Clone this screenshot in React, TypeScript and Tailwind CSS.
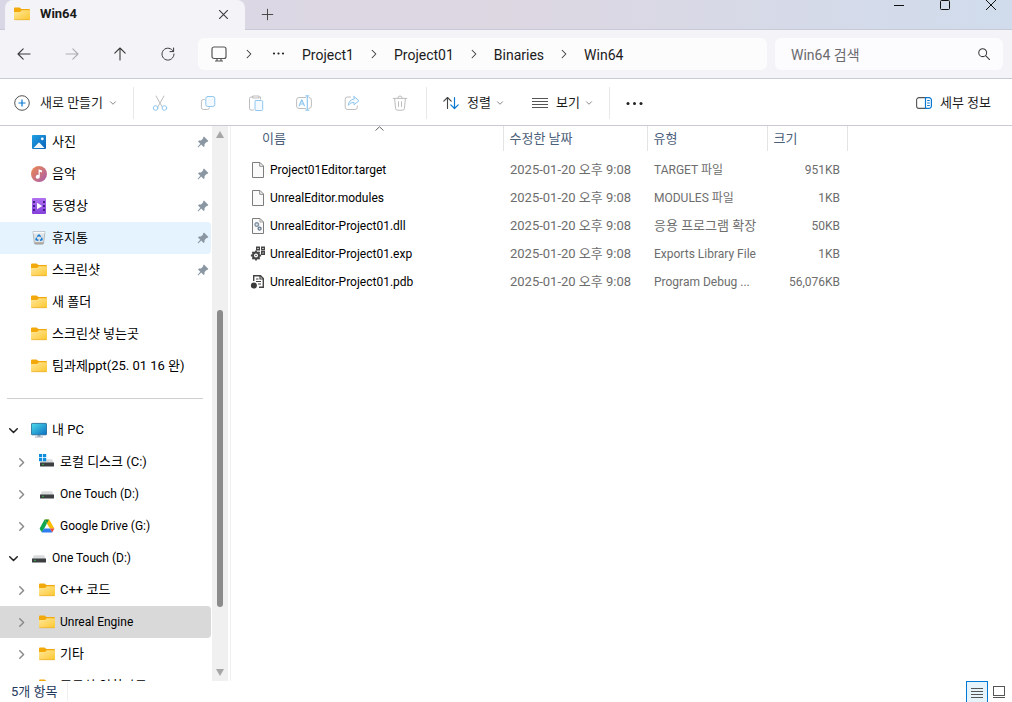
import React from "react";

type SvgProps = { className?: string };

const Folder = () => (
  <svg width="16" height="16" viewBox="0 0 16 16" className="shrink-0">
    <defs>
      <linearGradient id="fold" x1="0" y1="0" x2="1" y2="1">
        <stop offset="0" stopColor="#ffe79b" />
        <stop offset="1" stopColor="#fdc72f" />
      </linearGradient>
    </defs>
    <path d="M0 2.6Q0 1.5 1 1.5H5.6L7.4 3H15Q16 3 16 4V8H0Z" fill="#f2a90c" />
    <path d="M0 6H6L8 4.3H16V13.2Q16 14 15.2 14H.8Q0 14 0 13.2Z" fill="url(#fold)" />
    <path d="M.3 13.7H15.7" stroke="#e9a825" strokeWidth=".6" />
  </svg>
);

const Photos = () => (
  <svg width="16" height="16" viewBox="0 0 16 16" className="shrink-0">
    <defs>
      <linearGradient id="pho" x1="0" y1="0" x2="1" y2="1">
        <stop offset="0" stopColor="#20a0e4" />
        <stop offset="1" stopColor="#0a62b8" />
      </linearGradient>
    </defs>
    <rect x="1" y="1" width="14" height="14" rx="1" fill="url(#pho)" />
    <path d="M2.5 14 7.3 8.9Q8 8.2 8.7 8.9L13.5 14Z" fill="#f4faff" />
    <circle cx="11.3" cy="4.8" r="1.4" fill="#fff" />
  </svg>
);

const Music = () => (
  <svg width="16" height="16" viewBox="0 0 16 16" className="shrink-0">
    <defs>
      <linearGradient id="mus" x1="0" y1="0" x2="1" y2="1">
        <stop offset="0" stopColor="#ee8a4e" />
        <stop offset="1" stopColor="#a85cae" />
      </linearGradient>
    </defs>
    <circle cx="8" cy="8" r="8" fill="url(#mus)" />
    <path d="M7.6 3.2 11 4.4V6.6L8.8 5.8V10.8A2 2 0 1 1 7.6 9Z" fill="#fff" />
  </svg>
);

const Video = () => (
  <svg width="16" height="16" viewBox="0 0 16 16" className="shrink-0">
    <defs>
      <linearGradient id="vid" x1="0" y1="0" x2="0" y2="1">
        <stop offset="0" stopColor="#b070f0" />
        <stop offset="1" stopColor="#8440dc" />
      </linearGradient>
    </defs>
    <rect x="1" y="0" width="14" height="16" rx="1" fill="url(#vid)" />
    <path d="M2 3h2v2H2zM2 7h2v2H2zM2 11h2v2H2zM12 3h2v2h-2zM12 7h2v2h-2zM12 11h2v2h-2z" fill="#43208a" />
    <path d="M6 4.8 11.2 8 6 11.2Z" fill="#fff" />
  </svg>
);

const Recycle = () => (
  <svg width="16" height="16" viewBox="0 0 16 16" className="shrink-0">
    <path d="M2 1.5H14L12.6 13.2Q12.5 14.3 11.4 14.3H4.6Q3.5 14.3 3.4 13.2Z" fill="#dfe3e7" stroke="#9ea5ab" strokeWidth=".7" />
    <path d="M2.2 1.8H13.8L13.6 3.5H2.4Z" fill="#f7f8f9" />
    <path d="M3.4 12.3H12.6L12.3 14H3.7Z" fill="#aaa69e" />
    <path d="M6.3 6.7 8 4.9 9.7 6.7M10.6 7.6 11 9.8 8.9 10.3M7.4 10.3 5.1 9.8 5.5 7.6" fill="none" stroke="#1378cf" strokeWidth="1.4" />
  </svg>
);

const Monitor = () => (
  <svg width="16" height="16" viewBox="0 0 16 16" className="shrink-0">
    <defs>
      <linearGradient id="mon" x1="0" y1="0" x2="1" y2="1">
        <stop offset="0" stopColor="#4bdcea" />
        <stop offset="1" stopColor="#0b6fc2" />
      </linearGradient>
    </defs>
    <path d="M6.5 13H9.5V14.5H12V15.5H4V14.5H6.5Z" fill="#a4b0ba" />
    <rect x=".4" y="1.4" width="15.2" height="11.4" rx=".8" fill="url(#mon)" stroke="#17608f" strokeWidth=".8" />
  </svg>
);

const Drive = () => (
  <svg width="16" height="16" viewBox="0 0 16 16" className="shrink-0">
    <path d="M3 5.3H13L15 9H1Z" fill="#d9dbdd" />
    <rect x="1" y="8.4" width="14" height="4" rx=".5" fill="#3c3f42" />
    <rect x="3.4" y="9.8" width="1.2" height="1.2" fill="#31d843" />
  </svg>
);

const SystemDrive = () => (
  <svg width="16" height="16" viewBox="0 0 16 16" className="shrink-0">
    <path d="M6 5.3H13L15 9H1V8Z" fill="#d9dbdd" />
    <rect x="1" y="8.4" width="14" height="4" rx=".5" fill="#3c3f42" />
    <rect x="3.4" y="9.8" width="1.2" height="1.2" fill="#31d843" />
    <path d="M0 0H3.2V3.2H0ZM4 0H7.2V3.2H4ZM0 4H3.2V7.2H0ZM4 4H7.2V7.2H4Z" fill="#0f8ddf" />
  </svg>
);

const GoogleDrive = () => (
  <svg width="16" height="16" viewBox="0 0 16 16" className="shrink-0">
    <path d="M5.6 1.5 7.9 5.4 3.3 13.9 2.2 13.6.6 10.6Z" fill="#0fa750" />
    <path d="M10.2 1.5 15.4 10.5H10.9L7.9 5.4 5.6 1.5Z" fill="#fbbc04" />
    <path d="M5.6 1.5H10L7.9 5.4Z" fill="#12964a" />
    <path d="M5.2 10.5H10.9L13.4 14.2 12.9 14.4H3.1L2.6 14.2Z" fill="#2f7df0" />
    <path d="M10.9 10.5H15.4L13.7 13.6 13.2 14.2Z" fill="#ea4335" />
  </svg>
);

const Pin = () => (
  <svg width="12" height="12" viewBox="0 0 12 12" className="shrink-0">
    <path d="M7 .6 11.4 5 10.2 6.1 9.5 5.9 7.6 8 7.5 10.2 6.6 10.9 4.2 8.6 1.2 11.4.6 10.8 3.3 7.7 1 5.4 1.8 4.5 4 4.4 6.1 2.4 5.9 1.7Z" fill="#8a97a2" />
  </svg>
);

const BlankFile = () => (
  <svg width="16" height="18" viewBox="0 0 16 18" className="shrink-0">
    <path d="M2.5 1.5H10L13.5 5V16.5H2.5Z" fill="#fafafa" stroke="#7c7c7c" />
    <path d="M9.7 1.7V5.3H13.3" fill="none" stroke="#8c8c8c" />
  </svg>
);

const DllFile = () => (
  <svg width="16" height="18" viewBox="0 0 16 18" className="shrink-0">
    <path d="M2.5 1.5H10L13.5 5V16.5H2.5Z" fill="#fafafa" stroke="#7c7c7c" />
    <path d="M10 1.7V5H13.3" fill="none" stroke="#a0a0a0" />
    <circle cx="6.8" cy="7.6" r="1.8" fill="#dce6ee" stroke="#8795a3" strokeWidth="1.4" />
    <circle cx="9.6" cy="11.6" r="1.5" fill="#dce6ee" stroke="#66788a" strokeWidth="1.3" />
  </svg>
);

const ExpFile = () => (
  <svg width="16" height="18" viewBox="0 0 16 18" className="shrink-0">
    <circle cx="6" cy="10.5" r="3" fill="none" stroke="#444" strokeWidth="2" />
    <path d="M6 5.4V7M6 14V15.6M.9 10.5H2.5M9.5 10.5H11.1M2.4 6.9 3.5 8M8.5 13 9.6 14.1M9.6 6.9 8.5 8M3.5 13 2.4 14.1" stroke="#444" strokeWidth="1.8" />
    <circle cx="6" cy="10.5" r=".8" fill="#444" />
    <path d="M6.7 2.2H9.3V4.8H6.7ZM11.7 2.2H14.3V4.8H11.7ZM11.7 6.7H14.3V9.3H11.7Z" fill="#fff" stroke="#444" strokeWidth="1.4" />
  </svg>
);

const PdbFile = () => (
  <svg width="16" height="18" viewBox="0 0 16 18" className="shrink-0">
    <path d="M3.7 8V2.7H10.5L13.3 5.5V14.3H9" fill="#fff" stroke="#444" strokeWidth="1.4" />
    <path d="M10 2.5V6H13.4M6 6H8.5M6 8.5H11M8 11H11" fill="none" stroke="#444" strokeWidth="1.2" />
    <circle cx="3.9" cy="12.5" r="3" fill="#3c3c3c" />
  </svg>
);

const Stroke = ({ d, size = 16, color = "#3a3a3a", width = 1.1, className = "" }: { d: string; size?: number; color?: string; width?: number } & SvgProps) => (
  <svg width={size} height={size} viewBox="0 0 16 16" fill="none" stroke={color} strokeWidth={width} strokeLinecap="round" strokeLinejoin="round" className={"shrink-0 " + className}>
    <path d={d} />
  </svg>
);

const Caret = () => <Stroke d="M3 5.5 8 10.5 13 5.5" size={8} color="#8a8a8a" width={2} />;

const toolIcons: { label: string; icon: React.ReactNode }[] = [
  {
    label: "잘라내기",
    icon: (
      <>
        <path d="M4 1 10 11.6M12 1 6 11.6" stroke="#bdbdbd" />
        <circle cx="3.6" cy="13" r="2.3" stroke="#8fc7f0" />
        <circle cx="12.4" cy="13" r="2.3" stroke="#8fc7f0" />
      </>
    ),
  },
  {
    label: "복사",
    icon: (
      <>
        <path d="M4.4 4.5H3.4A2 2 0 0 0 1.4 6.5V12.5A2 2 0 0 0 3.4 14.5H7.5A2 2 0 0 0 9.4 13" stroke="#bdbdbd" />
        <rect x="5.8" y="1.5" width="9" height="10" rx="2" stroke="#8fc7f0" fill="#f4faff" />
      </>
    ),
  },
  {
    label: "붙여넣기",
    icon: (
      <>
        <path d="M5 2H3A1.5 1.5 0 0 0 1.5 3.5V13.5A1.5 1.5 0 0 0 3 15H5.5M11 2H12.5V4M5 1H11V3H5Z" stroke="#bdbdbd" />
        <rect x="7" y="5.5" width="7.7" height="10" rx="1" stroke="#8fc7f0" fill="#f4faff" />
      </>
    ),
  },
  {
    label: "이름 바꾸기",
    icon: (
      <>
        <path d="M9.5 2.5H3A2.5 2.5 0 0 0 .6 5V11A2.5 2.5 0 0 0 3 13.5H9.5M13 2.5A2.5 2.5 0 0 1 15.4 5V11A2.5 2.5 0 0 1 13 13.5" stroke="#bdbdbd" />
        <path d="M3.2 10.8 5.8 4.8 8.4 10.8M4.1 9H7.5M11.3 .8V15.2M9.8 .8H12.8M9.8 15.2H12.8" stroke="#8fc7f0" strokeWidth="1.2" />
      </>
    ),
  },
  {
    label: "공유",
    icon: (
      <>
        <path d="M6.5 2H3.5A2.3 2.3 0 0 0 1.2 4.3V12.2A2.3 2.3 0 0 0 3.5 14.5H11A2.3 2.3 0 0 0 13.3 12.2V11" stroke="#bdbdbd" />
        <path d="M10 1.5 15 5.7 10 9.8V7.4Q6.5 7.2 4.3 10.3 4.8 4.8 10 4Z" stroke="#8fc7f0" fill="#f4faff" />
      </>
    ),
  },
  {
    label: "삭제",
    icon: <path d="M1.2 3.4H14.8M5.8 3.2A2.2 2.2 0 0 1 10.2 3.2M2.6 3.5 3.6 13.5Q3.8 15.2 5.3 15.2H10.7Q12.2 15.2 12.4 13.5L13.4 3.5M6.5 6.8V11.5M9.5 6.8V11.5" stroke="#bdbdbd" />,
  },
];

type TreeNode = { icon: React.ReactNode; name: string; latin?: boolean; nested?: boolean; arrow?: "open" | "closed"; pinned?: boolean; state?: "hover" | "selected" };

const quick: TreeNode[] = [
  { icon: <Photos />, name: "사진", pinned: true },
  { icon: <Music />, name: "음악", pinned: true },
  { icon: <Video />, name: "동영상", pinned: true },
  { icon: <Recycle />, name: "휴지통", pinned: true, state: "hover" },
  { icon: <Folder />, name: "스크린샷", pinned: true },
  { icon: <Folder />, name: "새 폴더" },
  { icon: <Folder />, name: "스크린샷 넣는곳" },
  { icon: <Folder />, name: "팀과제ppt(25. 01 16 완)" },
];

const devices: TreeNode[] = [
  { icon: <Monitor />, name: "내 PC", arrow: "open" },
  { icon: <SystemDrive />, name: "로컬 디스크 (C:)", nested: true, arrow: "closed" },
  { icon: <Drive />, name: "One Touch (D:)", latin: true, nested: true, arrow: "closed" },
  { icon: <GoogleDrive />, name: "Google Drive (G:)", latin: true, nested: true, arrow: "closed" },
  { icon: <Drive />, name: "One Touch (D:)", latin: true, arrow: "open" },
  { icon: <Folder />, name: "C++ 코드", nested: true, arrow: "closed" },
  { icon: <Folder />, name: "Unreal Engine", latin: true, nested: true, arrow: "closed", state: "selected" },
  { icon: <Folder />, name: "기타", nested: true, arrow: "closed" },
  { icon: <Folder />, name: "포토샵 인화자료", nested: true },
];

const TreeRow = ({ node }: { node: TreeNode }) => (
  <li>
    <button
      className={
        "flex h-8 w-full items-center rounded-r-sm pr-[2px] text-left text-black " +
        (node.nested ? "pl-4 " : "pl-2 ") +
        (node.latin ? "text-xs " : "text-[13px] ") +
        (node.state === "hover" ? "bg-[#e5f3ff]" : node.state === "selected" ? "bg-[#d9d9d9]" : "")
      }
    >
      <span className="mr-3 flex w-[11px] shrink-0 justify-center">
        {node.arrow === "open" && <Stroke d="M2.5 5.5 8 11 13.5 5.5" size={11} color="#222" width={2.2} />}
        {node.arrow === "closed" && <Stroke d="M5.5 2.5 11 8 5.5 13.5" size={11} color="#8a8a8a" width={2.2} />}
      </span>
      {node.icon}
      <span className="ml-[5px] flex-1 whitespace-nowrap">{node.name}</span>
      {node.pinned && <Pin />}
    </button>
  </li>
);

const files = [
  { icon: <BlankFile />, name: "Project01Editor.target", type: "TARGET 파일", size: "951KB" },
  { icon: <BlankFile />, name: "UnrealEditor.modules", type: "MODULES 파일", size: "1KB" },
  { icon: <DllFile />, name: "UnrealEditor-Project01.dll", type: "응용 프로그램 확장", wide: true, size: "50KB" },
  { icon: <ExpFile />, name: "UnrealEditor-Project01.exp", type: "Exports Library File", size: "1KB" },
  { icon: <PdbFile />, name: "UnrealEditor-Project01.pdb", type: "Program Debug ...", size: "56,076KB" },
];

const Divider = () => <span className="h-8 w-px shrink-0 bg-[#e8e8e8]" />;

export default function App() {
  return (
    <div className="flex h-screen flex-col overflow-hidden bg-white font-['Roboto','Noto_Sans_CJK_KR',sans-serif] text-[13px] text-[#1b1b1b]">
      <header className="bg-[#f3f3f8]">
        <div className="flex h-[30px] items-start bg-linear-to-r from-[#d9d7e5] via-[#ddd7e2] to-[#d0dcec] pl-[5px] shadow-[inset_0_-1px_0_#c8c9d6]">
          <div className="flex h-[30px] w-60 items-center rounded-t-lg bg-[#f3f3f8] pr-[15px] pb-0.5 pl-[9px]">
            <Folder />
            <span className="ml-[10px] flex-1 font-bold">Win64</span>
            <button aria-label="탭 닫기">
              <Stroke d="M3 3 13 13M13 3 3 13" size={13} width={1.3} />
            </button>
          </div>
          <button aria-label="새 탭" className="ml-[14px] flex h-7 w-4 items-center justify-center">
            <Stroke d="M8 1.5V14.5M1.5 8H14.5" size={13} />
          </button>
          <div className="ml-auto flex gap-[6px] pr-px">
            <button aria-label="최소화" className="flex h-[10px] w-10 items-center justify-center">
              <svg width="10" height="10"><path d="M0 5.5H10" stroke="#111" /></svg>
            </button>
            <button aria-label="최대화" className="flex h-[10px] w-10 items-center justify-center">
              <svg width="10" height="10"><rect x=".5" y=".5" width="9" height="9" rx="1" fill="none" stroke="#111" /></svg>
            </button>
            <button aria-label="닫기" className="flex h-[10px] w-10 items-center justify-center">
              <svg width="10" height="10"><path d="M0 0 10 10M10 0 0 10" stroke="#111" /></svg>
            </button>
          </div>
        </div>
        <div className="flex h-[49px] items-center border-b border-[#c8cad8] pr-[9px]">
          <nav className="flex shrink-0 pr-[6px]">
            <button aria-label="뒤로" className="flex w-12 justify-center"><Stroke d="M14 8H2M7.2 2.8 2 8 7.2 13.2" /></button>
            <button aria-label="앞으로" className="flex w-12 justify-center"><Stroke d="M2 8H14M8.8 2.8 14 8 8.8 13.2" color="#adadb2" /></button>
            <button aria-label="위로" className="flex w-12 justify-center"><Stroke d="M8 14V2M2.8 7.2 8 2 13.2 7.2" /></button>
            <button aria-label="새로 고침" className="flex w-12 justify-center"><Stroke d="M13.4 5.5A6 6 0 1 0 14 8M13.6 2V5.6H10" width={1} /></button>
          </nav>
          <div className="flex h-8 min-w-0 flex-1 items-center overflow-hidden rounded-md bg-[#fcfcfd] pl-3 text-sm whitespace-nowrap">
            <button aria-label="위치">
              <svg width="18" height="18" viewBox="0 0 18 18" fill="none" stroke="#555" strokeWidth="1.2" className="shrink-0">
                <rect x="2" y="2" width="14" height="11.5" rx="2" />
                <path d="M7 13.5V16M11 13.5V16M5 16H13" />
              </svg>
            </button>
            <span className="mx-[15px]"><Stroke d="M5.5 3 10.5 8 5.5 13" size={12} width={1.4} /></span>
            <button aria-label="숨겨진 경로" className="mr-[7px] ml-[2px]">
              <svg width="13" height="10" fill="#222"><circle cx="2" cy="4.5" r="1.1" /><circle cx="6.5" cy="4.5" r="1.1" /><circle cx="11" cy="4.5" r="1.1" /></svg>
            </button>
            {["Project1", "Project01", "Binaries", "Win64"].map((part, i) => (
              <React.Fragment key={part}>
                {i > 0 && <span className="mx-1"><Stroke d="M5.5 3 10.5 8 5.5 13" size={12} width={1.4} /></span>}
                <button className="px-[10px] pt-0.5">{part}</button>
              </React.Fragment>
            ))}
          </div>
          <label className="ml-2 flex h-8 w-[228px] items-center rounded-md bg-[#fcfcfe] pr-3 pl-4">
            <input aria-label="Win64 검색" placeholder="Win64 검색" className="min-w-0 flex-1 bg-transparent pt-0.5 text-sm outline-none placeholder:text-[#6a6a6e]" />
            <Stroke d="M6.5 2A4.5 4.5 0 1 0 6.5 11A4.5 4.5 0 1 0 6.5 2M9.8 9.8 14.3 14.3" size={14} width={1.2} />
          </label>
        </div>
      </header>

      <div className="flex h-[47px] shrink-0 items-center border-b border-[#c8cad8] pt-0.5 pr-[21px] pl-[14px] whitespace-nowrap">
        <button className="flex items-center">
          <svg width="16" height="16" viewBox="0 0 16 16" fill="none">
            <circle cx="8" cy="8" r="7.3" stroke="#555" />
            <path d="M8 4.5V11.5M4.5 8H11.5" stroke="#0a78d0" strokeWidth="1.2" />
          </svg>
          <span className="mr-[6px] ml-[10px]">새로 만들기</span>
          <Caret />
        </button>
        <span className="ml-4 flex"><Divider /></span>
        <div className="mx-[2px] flex">
          {toolIcons.map((t) => (
            <button key={t.label} aria-label={t.label} className="flex w-12 justify-center">
              <svg width="16" height="16" viewBox="0 0 16 16" fill="none" strokeLinecap="round" strokeLinejoin="round">{t.icon}</svg>
            </button>
          ))}
        </div>
        <Divider />
        <button className="ml-4 flex items-center">
          <svg width="16" height="16" viewBox="0 0 16 16" fill="none" strokeLinecap="round" strokeLinejoin="round">
            <path d="M4.5 13.5V2.5M.8 6.2 4.5 2.5 8.2 6.2" stroke="#444" strokeWidth="1.1" />
            <path d="M11.5 2.5V13.5M7.8 9.8 11.5 13.5 15.2 9.8" stroke="#0a78d0" strokeWidth="1.2" />
          </svg>
          <span className="mr-[5px] ml-2">정렬</span>
          <Caret />
        </button>
        <button className="mr-4 ml-7 flex items-center">
          <svg width="16" height="16" viewBox="0 0 16 16"><path d="M0 3.5H16M0 6.5H16M0 9.5H16M0 12.5H16" stroke="#555" /></svg>
          <span className="mr-[5px] ml-2">보기</span>
          <Caret />
        </button>
        <Divider />
        <button aria-label="더 보기" className="ml-4">
          <svg width="17" height="6" fill="#222"><circle cx="2" cy="3.5" r="1.5" /><circle cx="8.5" cy="3.5" r="1.5" /><circle cx="15" cy="3.5" r="1.5" /></svg>
        </button>
        <button className="ml-auto flex items-center gap-2">
          <svg width="16" height="16" viewBox="0 0 16 16" fill="none">
            <path d="M9.5 2.6H3A2.4 2.4 0 0 0 .6 5V11A2.4 2.4 0 0 0 3 13.4H9.5" stroke="#555" strokeWidth="1.1" />
            <path d="M9.5 2.6H13A2.4 2.4 0 0 1 15.4 5V11A2.4 2.4 0 0 1 13 13.4H9.5Z" stroke="#0a78d0" strokeWidth="1.2" />
            <path d="M11.2 5.5H13.8M11.2 8H13.8M11.2 10.5H13.8" stroke="#0a78d0" />
          </svg>
          세부 정보
        </button>
      </div>

      <div className="flex min-h-0 flex-1">
        <aside className="flex w-[231px] shrink-0 overflow-hidden border-r border-[#f0f0f0]">
          <div className="w-[211px] shrink-0 overflow-hidden">
            <ul>{quick.map((n) => <TreeRow key={n.name} node={n} />)}</ul>
            <div className="flex h-8 items-center pr-2 pl-[7px]"><hr className="w-full border-[#cfcfcf]" /></div>
            <ul>{devices.map((n, i) => <TreeRow key={i} node={n} />)}</ul>
          </div>
          <div className="ml-px flex w-4 flex-col items-center bg-[#f0f0f0] py-[5px]">
            <svg width="8" height="7"><path d="M4 0 8 7H0Z" fill="#a6a6a6" /></svg>
            <div className="min-h-0 flex-[172]" />
            <div className="w-[6px] flex-[298] rounded-full bg-[#8b8b8b]" />
            <div className="min-h-0 flex-[62]" />
            <svg width="8" height="7"><path d="M0 0H8L4 7Z" fill="#a6a6a6" /></svg>
          </div>
        </aside>

        <main className="min-w-0 flex-1 overflow-hidden">
          <table className="w-[616px] table-fixed border-collapse text-left">
            <colgroup>
              <col className="w-[272px]" />
              <col className="w-36" />
              <col className="w-30" />
              <col className="w-20" />
            </colgroup>
            <thead className="text-[#4c607a]">
              <tr className="h-[25px]">
                <th className="relative border-r border-[#e3e3e3] p-0 pl-[31px] font-normal">
                  이름
                  <svg width="9" height="5" className="absolute top-0 left-36"><path d="M.5 4.5 4.5 .8 8.5 4.5" fill="none" stroke="#666" /></svg>
                </th>
                <th className="border-r border-[#e3e3e3] p-0 pl-[6px] font-normal">수정한 날짜</th>
                <th className="border-r border-[#e3e3e3] p-0 pl-[6px] font-normal">유형</th>
                <th className="border-r border-[#e3e3e3] p-0 pl-[6px] font-normal">크기</th>
              </tr>
            </thead>
            <tbody className="text-[#6d6d6d]">
              <tr className="h-[5px]"><td colSpan={4} className="p-0" /></tr>
              {files.map((f) => (
                <tr key={f.name} className="h-7">
                  <td className="p-0 pl-[19px] text-xs text-black">
                    <span className="flex items-center gap-1">{f.icon}{f.name}</span>
                  </td>
                  <td className="p-0 pl-[7px] whitespace-nowrap">2025-01-20 오후 9:08</td>
                  <td className={"p-0 pl-[7px] whitespace-nowrap " + (f.wide ? "" : "text-xs")}>{f.type}</td>
                  <td className="p-0 pr-[7px] text-right text-xs">{f.size}</td>
                </tr>
              ))}
            </tbody>
          </table>
        </main>
      </div>

      <footer className="flex h-[21px] shrink-0 items-center pr-[6px] pl-[11px] text-[#1e395b]">
        <span className="border-r border-[#f0f0f0] pr-[10px]">5개 항목</span>
        <div className="ml-auto flex items-center gap-[5px] self-stretch">
          <button aria-label="자세히" className="flex w-[22px] items-center justify-center self-stretch border border-b-0 border-[#0078d4] bg-[#e5f3fb] pt-px">
            <svg width="12" height="12"><path d="M0 1.5H12M0 4.5H12M0 7.5H12M0 10.5H12" stroke="#555" /></svg>
          </button>
          <button aria-label="큰 아이콘">
            <svg width="13" height="12" fill="none" stroke="#555"><rect x=".5" y=".5" width="11" height="9" /><path d="M0 11.5H12" /></svg>
          </button>
        </div>
      </footer>
    </div>
  );
}
